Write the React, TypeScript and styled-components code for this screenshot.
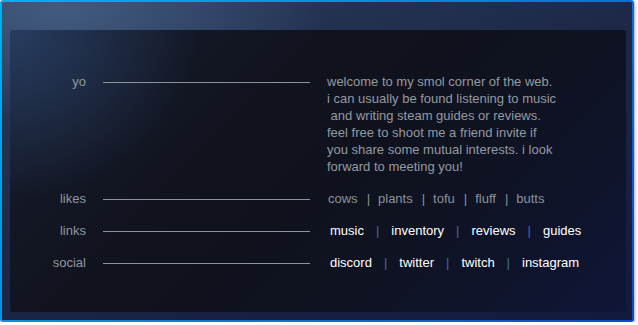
import styled, { createGlobalStyle } from "styled-components";

const GlobalStyle = createGlobalStyle`
  html, body {
    margin: 0;
    padding: 0;
    background: #ffffff;
  }
  body {
    font-family: "Liberation Sans", Arial, sans-serif;
    font-size: 13px;
  }
`;

type LinkGroup = { items: string[]; bright?: boolean };

const rows: { label: string; about?: string[]; group?: LinkGroup }[] = [
  {
    label: "yo",
    about: [
      "welcome to my smol corner of the web.",
      "i can usually be found listening to music",
      " and writing steam guides or reviews.",
      "feel free to shoot me a friend invite if",
      "you share some mutual interests. i look",
      "forward to meeting you!",
    ],
  },
  { label: "likes", group: { items: ["cows", "plants", "tofu", "fluff", "butts"] } },
  { label: "links", group: { items: ["music", "inventory", "reviews", "guides"], bright: true } },
  { label: "social", group: { items: ["discord", "twitter", "twitch", "instagram"], bright: true } },
];

const App = (): JSX.Element => {
  return (
    <>
      <GlobalStyle />
      <Frame>
        <Panel>
          <Rows>
            {rows.map((row) => (
              <Row key={row.label}>
                <Label>{row.label}</Label>
                <Rule />
                {row.about ? (
                  <About>
                    {row.about.map((line, i) => (
                      <div key={i}>{line}</div>
                    ))}
                  </About>
                ) : (
                  <Group $bright={row.group?.bright}>
                    {row.group?.items.map((item, i) => (
                      <Item key={item}>
                        {i > 0 && <Sep $bright={row.group?.bright}>|</Sep>}
                        <Word $bright={row.group?.bright}>{item}</Word>
                      </Item>
                    ))}
                  </Group>
                )}
              </Row>
            ))}
          </Rows>
        </Panel>
      </Frame>
    </>
  );
};

export default App;

const Frame = styled.div`
  box-sizing: border-box;
  width: 634px;
  height: 322px;
  padding: 28px 6px 8px 8px;
  border: 2px solid transparent;
  border-radius: 3px;
  background:
    radial-gradient(ellipse 260px 110px at 60px 8px, rgba(66, 92, 128, 0.95), rgba(66, 92, 128, 0) 100%) padding-box,
    linear-gradient(160deg, #2c3e5e 0%, #1d2848 45%, #121a3e 100%) padding-box,
    linear-gradient(135deg, #00b2ec 0%, #0a86da 45%, #1448c6 100%) border-box;
  box-shadow: 1px 1px 3px rgba(0, 0, 0, 0.35);
`;

const Panel = styled.div`
  box-sizing: border-box;
  height: 282px;
  border-radius: 2px;
  padding-top: 43px;
  background:
    radial-gradient(ellipse 190px 170px at 0px 0px, rgba(42, 66, 104, 0.85), rgba(42, 66, 104, 0) 100%),
    linear-gradient(135deg, #171d30 0%, #10121c 40%, #0f1220 65%, #0f1637 100%);
`;

const Rows = styled.div`
  display: grid;
  row-gap: 15px;
`;

const Row = styled.div`
  display: grid;
  grid-template-columns: 76px 207px auto;
  column-gap: 17px;
  align-items: start;
  line-height: 17px;
`;

const Label = styled.div`
  text-align: right;
  color: #8f98a0;
`;

const Rule = styled.div`
  height: 17px;
  display: flex;
  align-items: center;

  &::before {
    content: "";
    display: block;
    width: 100%;
    height: 1px;
    margin-top: 1px;
    background: #8c939b;
  }
`;

const About = styled.div`
  color: #939aa2;
  white-space: pre;
`;

const Group = styled.div<{ $bright?: boolean }>`
  display: flex;
  padding-left: ${(p) => (p.$bright ? "3px" : "1px")};
`;

const Item = styled.span`
  display: inline-flex;
`;

const Word = styled.span<{ $bright?: boolean }>`
  color: ${(p) => (p.$bright ? "#ffffff" : "#8a929a")};
`;

const Sep = styled.span<{ $bright?: boolean }>`
  margin: ${(p) => (p.$bright ? "0 12px" : "0 8px 0 9px")};
  color: ${(p) => (p.$bright ? "#3a6db0" : "#8a929a")};
`;
